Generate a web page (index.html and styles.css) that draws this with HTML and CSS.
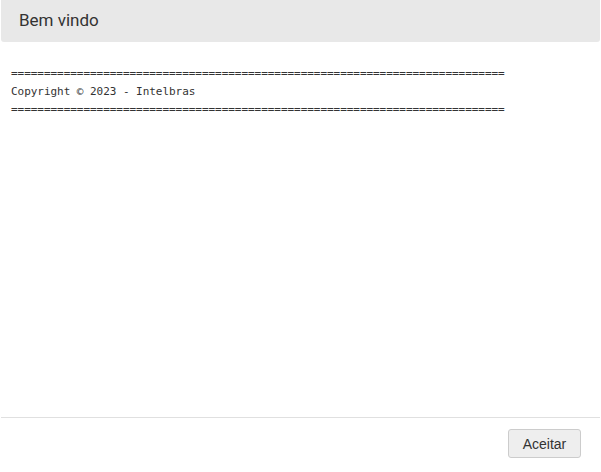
FILE: index.html
```html
<!DOCTYPE html>
<html lang="pt-BR">
<head>
    <meta charset="UTF-8">
    <meta name="viewport" content="width=device-width, initial-scale=1.0">
    <title>Bem vindo</title>
    <link rel="stylesheet" href="styles.css">
</head>
<body>
    <div class="modal">
        <div class="modal-header">Bem vindo</div>
        <div class="modal-body">
            <pre class="license">===========================================================================
Copyright © 2023 - Intelbras
===========================================================================</pre>
        </div>
        <div class="modal-footer">
            <button type="button" class="btn">Aceitar</button>
        </div>
    </div>
</body>
</html>
```

FILE: styles.css
```css
* {
    margin: 0;
    padding: 0;
    box-sizing: border-box;
}

body {
    font-family: 'Roboto', 'Liberation Sans', sans-serif;
    background-color: #fff;
    width: 601px;
    height: 472px;
    overflow: hidden;
}

.modal {
    display: flex;
    flex-direction: column;
    height: 472px;
    padding: 0 1px;
}

.modal-header {
    height: 42px;
    line-height: 40px;
    padding-left: 18px;
    background-color: #e8e8e8;
    border-radius: 0 0 3px 3px;
    color: #333;
    font-size: 17px;
}

.modal-body {
    flex: 1;
    padding: 23px 10px 0;
}

.license {
    font-family: 'DejaVu Sans Mono', 'Liberation Mono', monospace;
    font-size: 11px;
    line-height: 18px;
    letter-spacing: -0.04px;
    color: #333;
}

.modal-footer {
    display: flex;
    justify-content: flex-end;
    height: 55px;
    padding: 11px 19px 0 0;
    border-top: 1px solid #e0e0e0;
}

.btn {
    height: 29px;
    width: 73px;
    font-family: 'Liberation Sans', Arial, sans-serif;
    font-size: 14px;
    color: #333;
    background-color: #eee;
    border: 1px solid #ccc;
    border-radius: 3px;
    cursor: pointer;
}
```
